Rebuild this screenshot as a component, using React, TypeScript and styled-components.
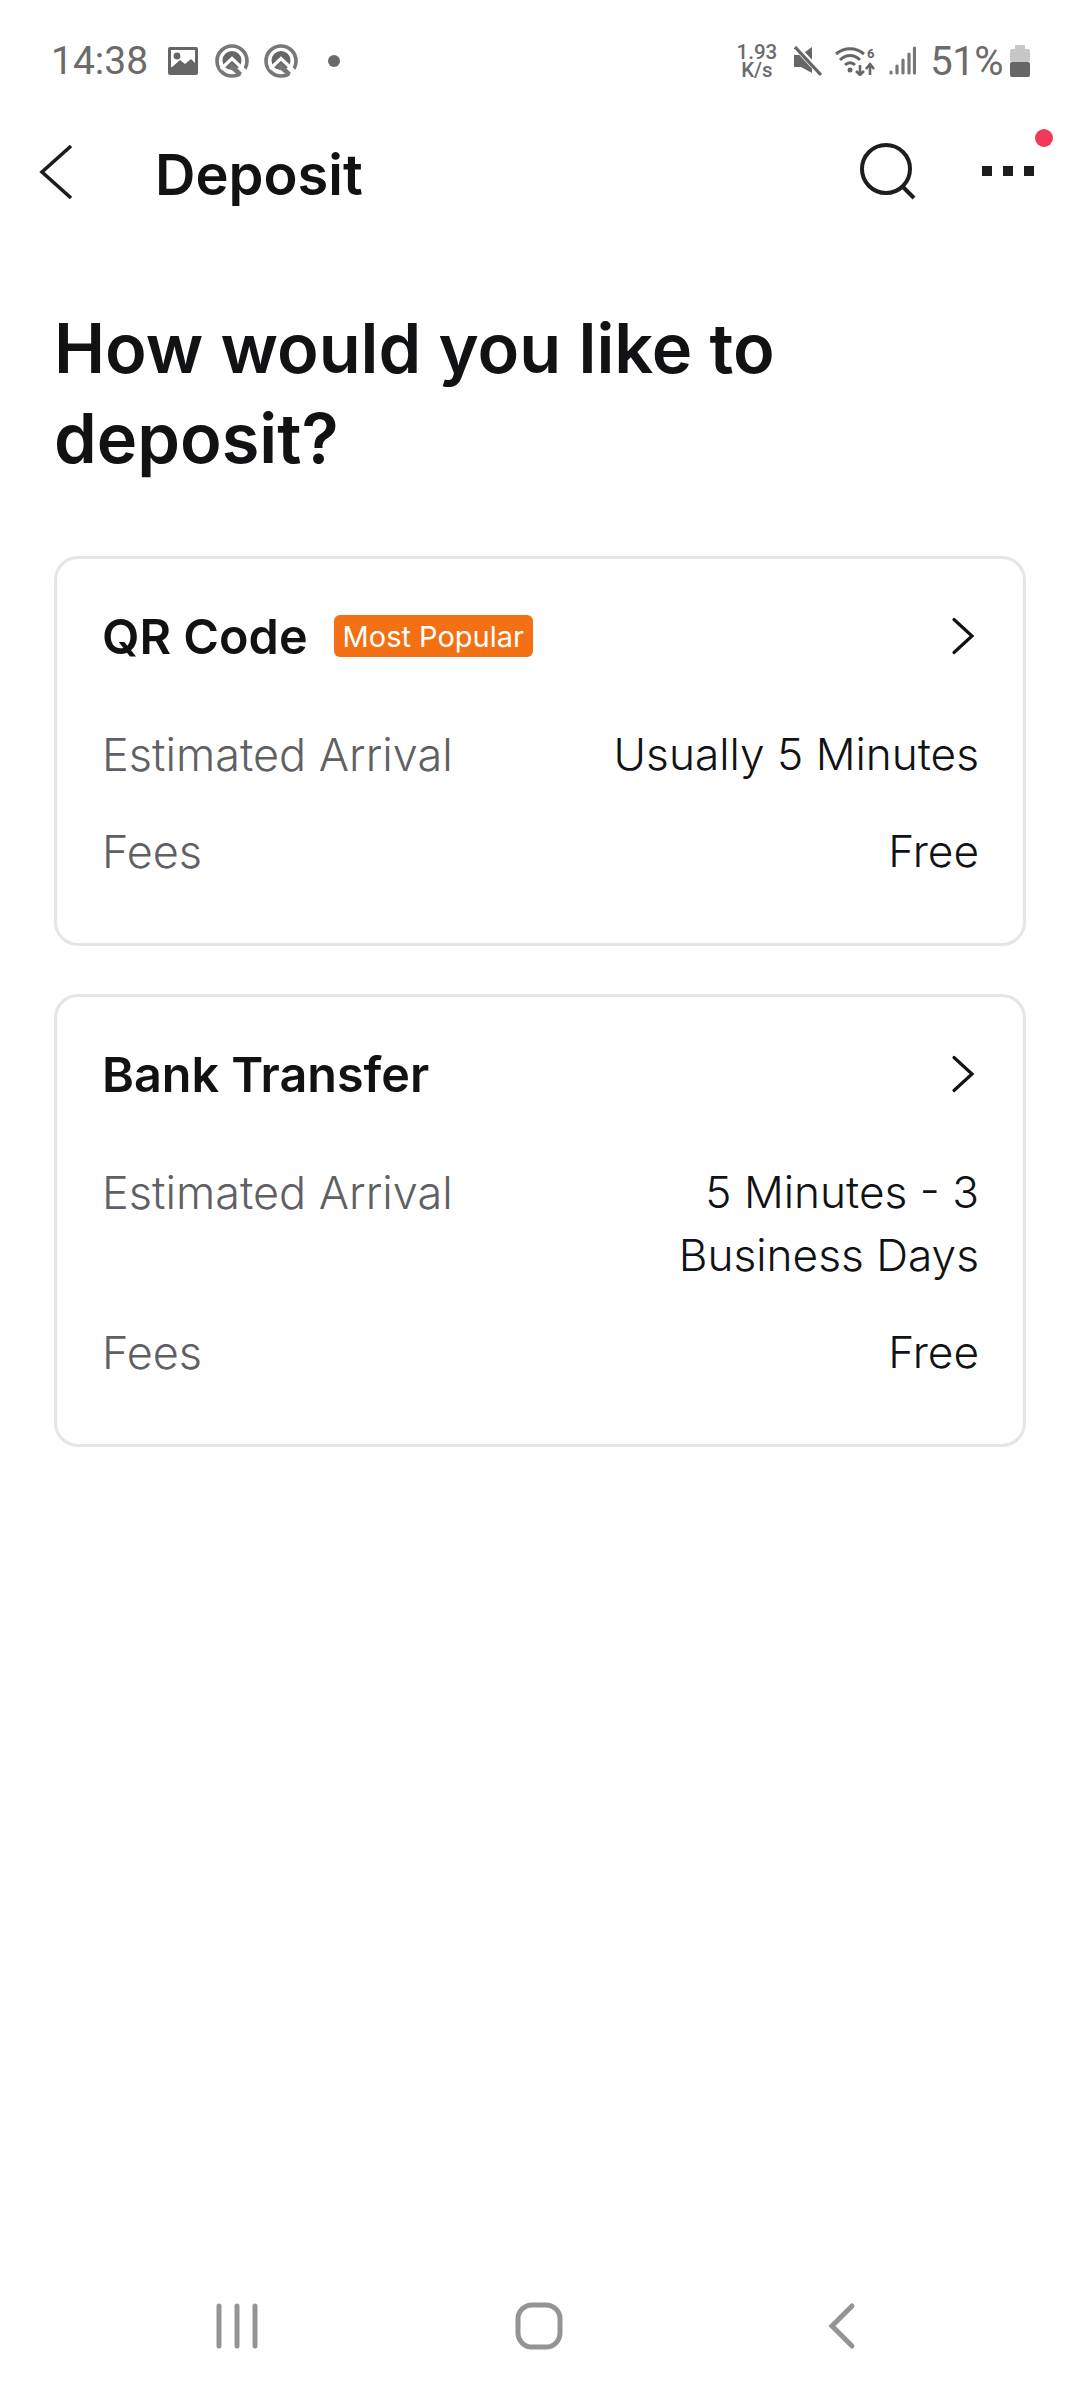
import React from "react";
import styled, { createGlobalStyle } from "styled-components";

const Global = createGlobalStyle`
  html, body { margin: 0; padding: 0; background: #fff; }
  * { box-sizing: border-box; }
`;

const Page = styled.div`
  width: 1080px;
  height: 2400px;
  display: flex;
  flex-direction: column;
  background: #fff;
  font-family: Inter, "Noto Sans", sans-serif;
  color: #111214;
`;

const StatusBar = styled.div`
  height: 122px;
  padding: 0 50px 0 51px;
  display: flex;
  align-items: center;
  justify-content: space-between;
  font-family: Roboto, sans-serif;
  color: #6b6b6b;
`;
const StatusGroup = styled.div`
  display: flex;
  align-items: center;
`;
const Clock = styled.span`
  font-size: 39px;
  margin-right: 20px;
`;
const Speed = styled.div`
  display: flex;
  flex-direction: column;
  align-items: center;
  font-size: 20.5px;
  line-height: 18px;
  font-weight: 500;
  margin-right: 17px;
`;
const Battery = styled.span`
  font-size: 40px;
  margin: 0 7px 0 14px;
  letter-spacing: -0.5px;
`;
const Ico = styled.svg<{ $gap?: number }>`
  display: block;
  margin-right: ${(p) => p.$gap ?? 0}px;
  flex: none;
`;

const Toolbar = styled.div`
  height: 100px;
  padding: 0 38px;
  display: flex;
  align-items: center;
`;
const ToolbarTitle = styled.h1`
  margin: 6px 0 0 77px;
  font-size: 56px;
  font-weight: 600;
  flex: 1;
`;
const MoreWrap = styled.div`
  position: relative;
  margin-left: 62px;
  width: 60px;
  height: 60px;
`;
const Dot = styled.span`
  position: absolute;
  top: -13px;
  right: -11px;
  width: 18px;
  height: 18px;
  border-radius: 50%;
  background: #ef3a58;
`;

const Content = styled.main`
  flex: 1;
  padding: 0 54px;
`;
const Heading = styled.h2`
  margin: 82px 0 0;
  font-size: 68.5px;
  line-height: 90px;
  font-weight: 600;
`;
const Card = styled.section`
  margin-top: 72px;
  border: 3px solid #e5e5e5;
  border-radius: 24px;
  padding: 42px 44px 43px 45px;
  & + & {
    margin-top: 48px;
  }
`;
const CardHead = styled.div`
  display: flex;
  align-items: center;
  height: 70px;
  margin-bottom: 35px;
`;
const CardTitle = styled.h3`
  margin: 0;
  font-size: 48.5px;
  font-weight: 600;
`;
const Badge = styled.span`
  margin-left: 26px;
  height: 42px;
  padding: 0 9px;
  display: flex;
  align-items: center;
  background: #f37014;
  color: #fff;
  border-radius: 6px;
  font-size: 29px;
  font-weight: 400;
`;
const Chevron = styled.svg`
  margin-left: auto;
  margin-right: 4px;
  display: block;
`;
const Row = styled.div`
  display: flex;
  justify-content: space-between;
  padding: 17px 0;
  font-size: 45px;
  line-height: 63px;
  font-weight: 300;
`;
const Label = styled.span`
  color: #5f6064;
`;
const Value = styled.span`
  max-width: 420px;
  text-align: right;
  font-size: 44.2px;
  color: #111214;
`;

const NavBar = styled.nav`
  height: 148px;
  padding-right: 3px;
  display: grid;
  grid-template-columns: repeat(3, 302px);
  justify-content: center;
  align-items: center;
  justify-items: center;
`;

const ChevronRight = () => (
  <Chevron width="24" height="38" viewBox="0 0 24 38" fill="none">
    <path d="M3 2.5 L21 19 L3 35.5" stroke="#111214" strokeWidth="3.2" strokeLinecap="round" />
  </Chevron>
);

const Ring = ({ gap }: { gap: number }) => (
  <Ico $gap={gap} width="34" height="34" viewBox="0 0 34 34">
    <circle cx="17" cy="17" r="15" fill="none" stroke="#777" strokeWidth="3.6" />
    <path d="M20 20 L33 33" stroke="#fff" strokeWidth="7" />
    <circle cx="17" cy="16.5" r="9.5" fill="#666" />
    <path d="M6 25 L17 14.5 L30 27" fill="none" stroke="#fff" strokeWidth="3.2" />
    <path d="M13 23 L17 19 L27 29 L24 32 Z" fill="#777" />
  </Ico>
);

const rows1 = [
  ["Estimated Arrival", "Usually 5 Minutes"],
  ["Fees", "Free"],
];
const rows2 = [
  ["Estimated Arrival", "5 Minutes - 3 Business Days"],
  ["Fees", "Free"],
];

export default function App() {
  return (
    <Page>
      <Global />
      <StatusBar>
        <StatusGroup>
          <Clock>14:38</Clock>
          <Ico $gap={17} width="30" height="28" viewBox="0 0 30 28">
            <rect x="0" y="0" width="30" height="28" rx="2" fill="#666" />
            <rect x="3" y="3" width="24" height="17" fill="#fff" />
            <circle cx="9" cy="9" r="3.4" fill="#666" />
            <path d="M3 21 L12 13 L17 17 L23 12 L27 16 V24 H3 Z" fill="#666" />
          </Ico>
          <Ring gap={15} />
          <Ring gap={30} />
          <Ico width="12" height="12" viewBox="0 0 12 12">
            <circle cx="6" cy="6" r="6" fill="#6b6b6b" />
          </Ico>
        </StatusGroup>
        <StatusGroup>
          <Speed>
            <span>1.93</span>
            <span>K/s</span>
          </Speed>
          <Ico $gap={13} width="28" height="30" viewBox="0 0 28 30">
            <path d="M0 9 H7 L18 1 V27 L7 21 H0 Z" fill="#666" />
            <path d="M1 0 L28 29" stroke="#fff" strokeWidth="6" />
            <path d="M1 1 L27 29" stroke="#666" strokeWidth="3.2" />
          </Ico>
          <Ico $gap={14} width="40" height="30" viewBox="0 0 40 30">
            <g fill="none" stroke="#666" strokeWidth="3">
              <path d="M1 8 C9 1 21 1 29 8" />
              <path d="M5 14 C11 8 19 8 25 14" />
              <path d="M10 19 C13 16 17 16 20 19" />
              <path d="M25 19 V29 M21 25 L25 29 L29 25" strokeWidth="2.6" />
              <path d="M35 29 V19 M31 23 L35 18 L39 23" strokeWidth="2.6" />
            </g>
            <circle cx="15" cy="24" r="2.5" fill="#666" />
            <text x="32" y="12" fontSize="13" fontWeight="700" fontFamily="Roboto" fill="#666">
              6
            </text>
          </Ico>
          <Ico width="27" height="30" viewBox="0 0 27 30">
            <g stroke="#777" strokeWidth="3.2" strokeLinecap="round">
              <path d="M2 27 V26 M8 27 V20 M14 27 V14 M20 27 V8 M25.5 27 V2" />
            </g>
          </Ico>
          <Battery>51%</Battery>
          <Ico width="20" height="32" viewBox="0 0 20 32">
            <rect x="5" y="0" width="10" height="5" fill="#c6c6c6" />
            <rect x="0" y="4" width="20" height="13" rx="2" fill="#c6c6c6" />
            <rect x="0" y="17" width="20" height="15" rx="2" fill="#666" />
          </Ico>
        </StatusGroup>
      </StatusBar>

      <Toolbar>
        <svg width="40" height="58" viewBox="0 0 40 58" fill="none">
          <path d="M33 3 L4 29 L33 55" stroke="#1d1d1f" strokeWidth="3.6" />
        </svg>
        <ToolbarTitle>Deposit</ToolbarTitle>
        <svg width="60" height="60" viewBox="0 0 60 60" fill="none">
          <circle cx="26" cy="27" r="24" stroke="#1d1d1f" strokeWidth="4" />
          <path d="M42 44 L54 56" stroke="#1d1d1f" strokeWidth="4" />
        </svg>
        <MoreWrap>
          <svg width="60" height="60" viewBox="0 0 60 60">
            <rect x="0" y="24" width="10" height="10" fill="#1d1d1f" />
            <rect x="21" y="24" width="10" height="10" fill="#1d1d1f" />
            <rect x="42" y="24" width="10" height="10" fill="#1d1d1f" />
          </svg>
          <Dot />
        </MoreWrap>
      </Toolbar>

      <Content>
        <Heading>
          How would you like to
          <br />
          deposit?
        </Heading>
        <Card>
          <CardHead>
            <CardTitle>QR Code</CardTitle>
            <Badge>Most Popular</Badge>
            <ChevronRight />
          </CardHead>
          {rows1.map(([a, b]) => (
            <Row key={a}>
              <Label>{a}</Label>
              <Value>{b}</Value>
            </Row>
          ))}
        </Card>
        <Card>
          <CardHead>
            <CardTitle>Bank Transfer</CardTitle>
            <ChevronRight />
          </CardHead>
          {rows2.map(([a, b]) => (
            <Row key={a}>
              <Label>{a}</Label>
              <Value>{b}</Value>
            </Row>
          ))}
        </Card>
      </Content>

      <NavBar>
        <svg width="44" height="46" viewBox="0 0 44 46" stroke="#949494" strokeWidth="5" strokeLinecap="round">
          <path d="M4 3 V43 M22 3 V43 M40 3 V43" />
        </svg>
        <svg width="48" height="48" viewBox="0 0 48 48" fill="none">
          <rect x="3" y="3" width="42" height="42" rx="14" stroke="#949494" strokeWidth="5" />
        </svg>
        <svg width="30" height="48" viewBox="0 0 30 48" fill="none">
          <path d="M26 4 L6 24 L26 44" stroke="#949494" strokeWidth="5" strokeLinecap="round" />
        </svg>
      </NavBar>
    </Page>
  );
}
